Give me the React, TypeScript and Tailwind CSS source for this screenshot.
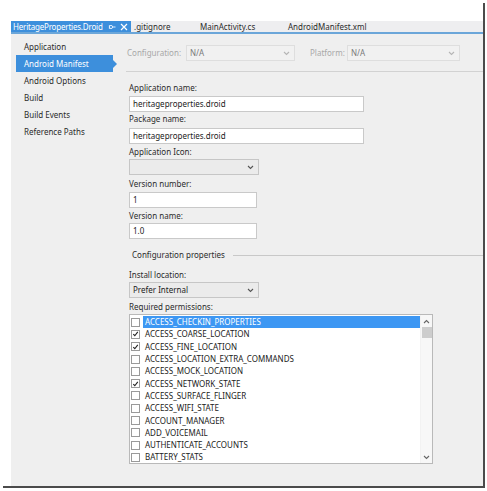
import React from "react";

const Chevron = ({ color = "#777" }: { color?: string }) => (
  <svg width="7" height="5" viewBox="0 0 7 5" className="shrink-0">
    <path d="M1 1 L3.5 3.5 L6 1" fill="none" stroke={color} strokeWidth="1.1" />
  </svg>
);

const ChevronUp = () => (
  <svg width="7" height="5" viewBox="0 0 7 5">
    <path d="M1 4 L3.5 1.5 L6 4" fill="none" stroke="#666" strokeWidth="1.1" />
  </svg>
);

const Check = () => (
  <svg width="8" height="8" viewBox="0 0 8 8">
    <path d="M1.5 4.2 L3.2 6 L6.6 1.6" fill="none" stroke="#222" strokeWidth="1.3" />
  </svg>
);

const perms: [string, boolean][] = [
  ["ACCESS_CHECKIN_PROPERTIES", false],
  ["ACCESS_COARSE_LOCATION", true],
  ["ACCESS_FINE_LOCATION", true],
  ["ACCESS_LOCATION_EXTRA_COMMANDS", false],
  ["ACCESS_MOCK_LOCATION", false],
  ["ACCESS_NETWORK_STATE", true],
  ["ACCESS_SURFACE_FLINGER", false],
  ["ACCESS_WIFI_STATE", false],
  ["ACCOUNT_MANAGER", false],
  ["ADD_VOICEMAIL", false],
  ["AUTHENTICATE_ACCOUNTS", false],
  ["BATTERY_STATS", false],
];

const navItems = [
  "Application",
  "Android Manifest",
  "Android Options",
  "Build",
  "Build Events",
  "Reference Paths",
];

const Label = ({ children, cls = "" }: { children: React.ReactNode; cls?: string }) => (
  <div className={`h-[14px] leading-[14px] text-[#2b2b2b] ${cls}`}>{children}</div>
);

const TextBox = ({ value, w, cls = "" }: { value: string; w: string; cls?: string }) => (
  <div className={`h-[16px] ${w} border border-[#c9c9c9] bg-white flex items-center pl-[3px] text-[#222] ${cls}`}>
    {value}
  </div>
);

export default function App() {
  return (
    <div
      className="w-[487px] h-[491px] bg-white overflow-hidden pt-[3px] pl-[3px]"
      style={{ fontFamily: '"Noto Sans", "Open Sans", sans-serif', fontSize: "8px" }}
    >
      <div className="w-[482px] h-[485px] border-r-2 border-b-2 border-[#4b4b4b] pt-[18px] pl-[8px]">
        <div className="w-[472px] h-[465px] bg-[#efefef] flex flex-col">
          {/* tab strip */}
          <div className="h-[11px] bg-[#eeeef0] border-b-2 border-[#6ba6d9] flex items-stretch shrink-0 box-content">
            <div className="w-[120px] shrink-0 bg-[#3d8fdc] text-white flex items-center pl-[2px] leading-none tracking-[-0.2px] whitespace-nowrap">
              <span className="shrink-0">HeritageProperties.Droid</span>
              <svg width="8" height="8" viewBox="0 0 8 8" className="ml-[5px] shrink-0">
                <circle cx="3" cy="4" r="1.6" fill="none" stroke="#dfeeff" strokeWidth="1" />
                <path d="M4.6 4 H7.5 M1.4 2.2 V5.8" stroke="#dfeeff" strokeWidth="1" />
              </svg>
              <svg width="8" height="8" viewBox="0 0 8 8" className="ml-[4px] shrink-0">
                <path d="M1 1 L7 7 M7 1 L1 7" stroke="white" strokeWidth="1.2" />
              </svg>
            </div>
            <div className="flex items-center pl-[3px] w-[69px] shrink-0 text-[#2b2b2b]">.gitignore</div>
            <div className="flex items-center w-[88px] shrink-0 text-[#2b2b2b]">MainActivity.cs</div>
            <div className="flex items-center text-[#2b2b2b]">AndroidManifest.xml</div>
          </div>

          <div className="flex flex-1 min-h-0">
            {/* left nav */}
            <div className="w-[114px] pl-[5px] pt-[4px] shrink-0">
              {navItems.map((n) => (
                <div
                  key={n}
                  className={`relative h-[17px] w-[97px] flex items-center pl-[8px] ${
                    n === "Android Manifest" ? "bg-[#3d8fdc] text-white" : "text-[#2b2b2b]"
                  }`}
                >
                  {n}
                  {n === "Android Manifest" && (
                    <div className="absolute right-[-4px] top-[4.5px] w-0 h-0 border-t-[4px] border-b-[4px] border-l-[4px] border-t-transparent border-b-transparent border-l-[#3d8fdc]" />
                  )}
                </div>
              ))}
            </div>

            {/* right pane */}
            <div className="flex-1 flex flex-col">
              <div className="mt-[11px] h-[16px] flex items-center pl-[2px] shrink-0">
                <div className="w-[59px] text-[#a8a8a8]">Configuration:</div>
                <div className="w-[109px] h-[16px] border border-[#dedede] bg-[#f1f1f1] flex items-center justify-between pl-[3px] pr-[4px] text-[#7a7a7a]">
                  <span>N/A</span>
                  <Chevron color="#b5b5b5" />
                </div>
                <div className="ml-[15px] w-[37px] text-[#a8a8a8]">Platform:</div>
                <div className="w-[113px] h-[16px] border border-[#dedede] bg-[#f1f1f1] flex items-center justify-between pl-[3px] pr-[4px] text-[#7a7a7a]">
                  <span>N/A</span>
                  <Chevron color="#b5b5b5" />
                </div>
              </div>
              <div className="mt-[10px] ml-[1px] border-t border-[#d2d2d2]" />

              <div className="pl-[4px] mt-[9px] flex flex-col">
                <Label>Application name:</Label>
                <TextBox value="heritageproperties.droid" w="w-[235px]" cls="mt-[1px]" />
                <Label cls="h-[13px] leading-[13px]">Package name:</Label>
                <TextBox value="heritageproperties.droid" w="w-[235px]" cls="mt-[2px]" />
                <Label cls="mt-[1px]">Application Icon:</Label>
                <div className="h-[16px] w-[130px] border border-[#c6c6c6] bg-[#ebebeb] flex items-center justify-end pr-[4px]">
                  <Chevron color="#555" />
                </div>
                <Label cls="mt-[2px]">Version number:</Label>
                <TextBox value="1" w="w-[128px]" cls="mt-[1px]" />
                <Label cls="mt-[1px]">Version name:</Label>
                <TextBox value="1.0" w="w-[128px]" />
                <div className="mt-[9px] h-[14px] flex items-center">
                  <span className="ml-[3px] text-[#2b2b2b]">Configuration properties</span>
                  <div className="ml-[8px] flex-1 border-t border-[#c8c8c8]" />
                </div>
                <Label cls="mt-[6px]">Install location:</Label>
                <div className="h-[16px] w-[130px] border border-[#c6c6c6] bg-[#ebebeb] flex items-center justify-between pl-[3px] pr-[4px] text-[#222]">
                  <span>Prefer Internal</span>
                  <Chevron color="#555" />
                </div>
                <Label cls="mt-[2px]">Required permissions:</Label>
                <div className="h-[150px] w-[304px] border border-[#b9b9b9] bg-white flex">
                  <div className="flex-1 pt-[1px] pl-[1px]">
                    {perms.map(([p, c], i) => (
                      <div key={p} className="h-[12.3px] flex items-center">
                        <div className="w-[9px] h-[9px] border border-[#9a9a9a] bg-white flex items-center justify-center shrink-0">
                          {c && <Check />}
                        </div>
                        <div
                          className={`ml-[3px] h-full flex-1 flex items-center pl-[2px] ${
                            i === 0 ? "bg-[#3d97f3] text-white" : "text-[#222]"
                          }`}
                        >
                          {p}
                        </div>
                      </div>
                    ))}
                  </div>
                  <div className="w-[12px] flex flex-col items-center border-l border-[#f2f2f2] bg-[#f7f7f7]">
                    <div className="h-[12px] flex items-center">
                      <ChevronUp />
                    </div>
                    <div className="w-[10px] h-[11px] bg-[#cdcdcd]" />
                    <div className="flex-1" />
                    <div className="h-[12px] flex items-center">
                      <Chevron color="#666" />
                    </div>
                  </div>
                </div>
              </div>
            </div>
          </div>
        </div>
      </div>
    </div>
  );
}
